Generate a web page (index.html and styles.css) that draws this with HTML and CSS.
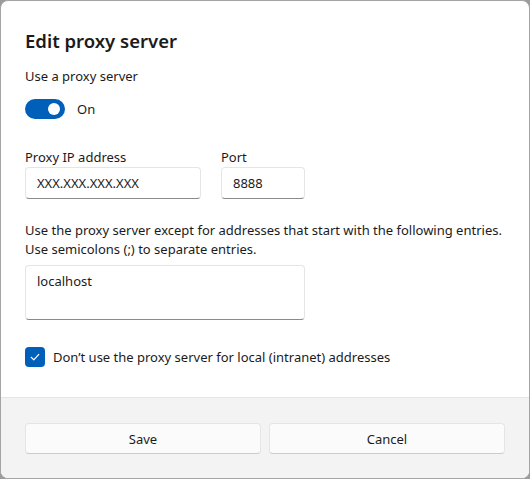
FILE: index.html
```html
<!DOCTYPE html>
<html lang="en">
<head>
    <meta charset="UTF-8">
    <meta name="viewport" content="width=device-width, initial-scale=1.0">
    <title>Edit proxy server</title>
    <link rel="stylesheet" href="styles.css">
</head>
<body>
    <div class="dialog">
        <div class="dialog-body">
            <h1>Edit proxy server</h1>

            <div class="setting">
                <p class="setting-label">Use a proxy server</p>
                <label class="toggle">
                    <span class="toggle-track"><span class="toggle-knob"></span></span>
                    <span>On</span>
                </label>
            </div>

            <div class="field-row">
                <div class="field field-ip">
                    <label for="proxyIp">Proxy IP address</label>
                    <div class="input" id="proxyIp">XXX.XXX.XXX.XXX</div>
                </div>
                <div class="field field-port">
                    <label for="port">Port</label>
                    <div class="input" id="port">8888</div>
                </div>
            </div>

            <p class="hint">
                Use the proxy server except for addresses that start with the following entries.<br>
                Use semicolons (;) to separate entries.
            </p>
            <div class="input textarea">localhost</div>

            <label class="checkbox">
                <span class="checkbox-box">
                    <svg width="12" height="12" viewBox="0 0 12 12">
                        <path d="M2.2 6.3 L4.8 8.8 L9.8 3.4" fill="none" stroke="#fff" stroke-width="1.2" stroke-linecap="round" stroke-linejoin="round"/>
                    </svg>
                </span>
                <span>Don’t use the proxy server for local (intranet) addresses</span>
            </label>
        </div>

        <div class="dialog-footer">
            <button type="button">Save</button>
            <button type="button">Cancel</button>
        </div>
    </div>
</body>
</html>
```

FILE: styles.css
```css
* {
    margin: 0;
    padding: 0;
    box-sizing: border-box;
}

body {
    background-color: #9c9c9c;
    color: #1b1b1b;
    font-family: 'Noto Sans', 'Open Sans', sans-serif;
    font-size: 13px;
    line-height: 20px;
    width: 530px;
    height: 479px;
    overflow: hidden;
}

.dialog {
    width: 530px;
    height: 479px;
    background-color: #fff;
    border: 1px solid #a4a4a4;
    border-radius: 8px;
    overflow: hidden;
    display: flex;
    flex-direction: column;
}

.dialog-body {
    flex: 1;
    padding: 26px 24px 0;
}

h1 {
    font-size: 18.5px;
    line-height: 28px;
    font-weight: 600;
    margin-bottom: 11px;
}

.setting-label {
    margin-bottom: 13px;
}

.toggle {
    display: flex;
    align-items: center;
    gap: 12px;
}

.toggle-track {
    width: 40px;
    height: 20px;
    border-radius: 10px;
    background-color: #005fb8;
    display: flex;
    align-items: center;
    justify-content: flex-end;
    padding-right: 5px;
}

.toggle-knob {
    width: 12px;
    height: 12px;
    border-radius: 50%;
    background-color: #fff;
}

.field-row {
    display: flex;
    gap: 20px;
    margin-top: 29px;
}

.field label {
    display: block;
    line-height: 19px;
}

.field-ip {
    width: 176px;
}

.field-port {
    width: 84px;
}

.input {
    height: 32px;
    padding: 0 11px;
    display: flex;
    align-items: center;
    background-color: #fff;
    border: 1px solid #e5e5e5;
    border-bottom-color: #8a8a8a;
    border-radius: 4px;
}

.hint {
    margin-top: 22px;
    line-height: 19px;
    white-space: nowrap;
}

.textarea {
    width: 280px;
    height: 55px;
    margin-top: 6px;
    align-items: flex-start;
    padding-top: 5px;
}

.checkbox {
    display: flex;
    align-items: center;
    gap: 8px;
    margin-top: 27px;
}

.checkbox-box {
    width: 20px;
    height: 20px;
    border-radius: 4px;
    background-color: #005fb8;
    display: flex;
    align-items: center;
    justify-content: center;
}

.dialog-footer {
    height: 81px;
    background-color: #f3f3f3;
    border-top: 1px solid #e5e5e5;
    padding: 25px 24px 0;
    display: flex;
    gap: 8px;
}

button {
    flex: 1;
    height: 31px;
    font-family: inherit;
    font-size: 13px;
    color: #1b1b1b;
    background-color: #fbfbfb;
    border: 1px solid #e5e5e5;
    border-bottom-color: #cccccc;
    border-radius: 4px;
}
```
